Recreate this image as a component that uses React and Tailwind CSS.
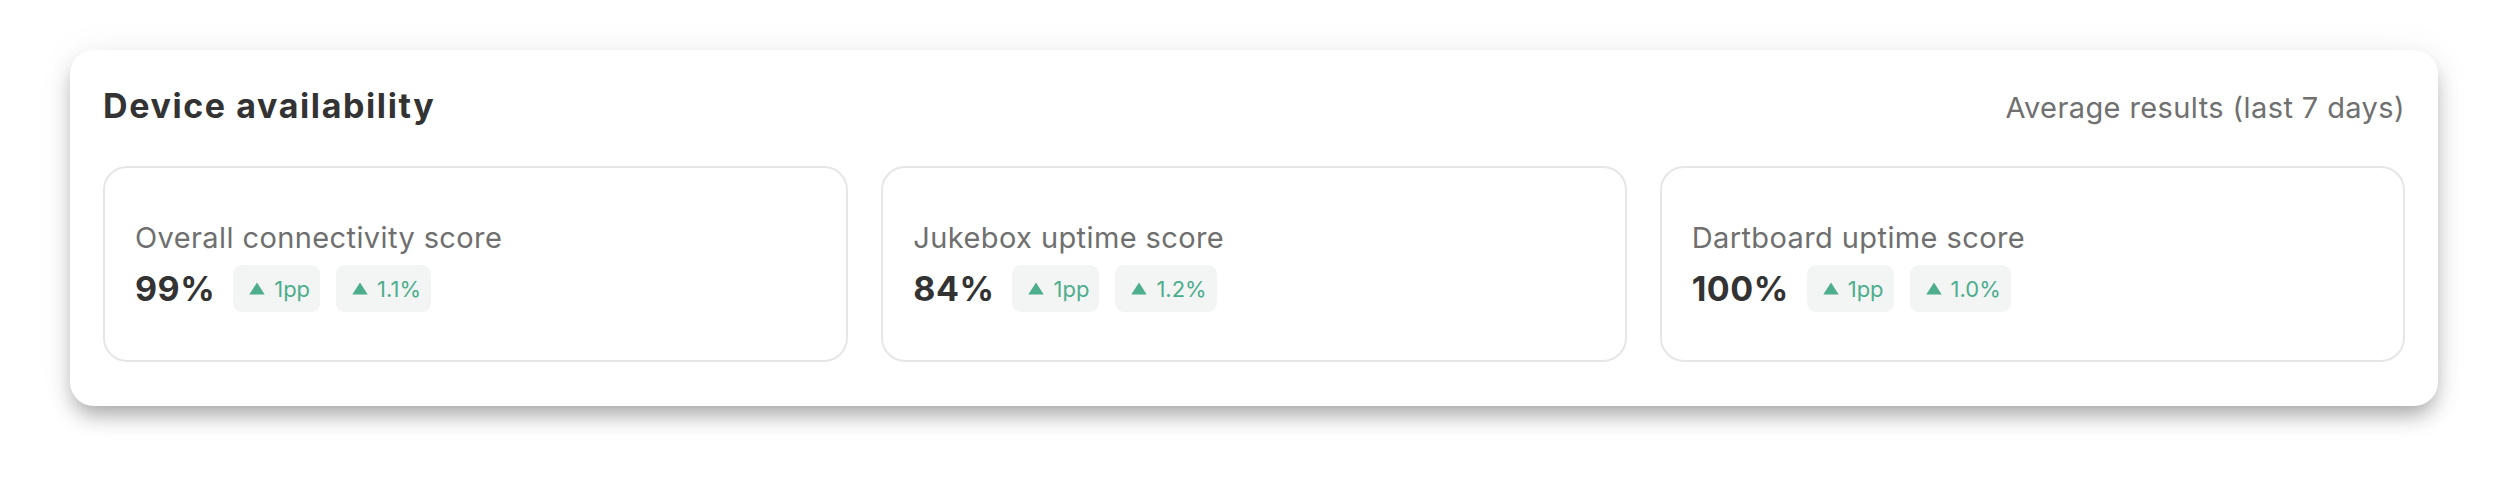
import React from 'react';

const stats = [
  { label: 'Overall connectivity score', value: '99%', deltas: ['1pp', '1.1%'] },
  { label: 'Jukebox uptime score', value: '84%', deltas: ['1pp', '1.2%'] },
  { label: 'Dartboard uptime score', value: '100%', deltas: ['1pp', '1.0%'] },
];

function UpBadge({ text }) {
  return (
    <div className="flex h-[47px] items-center gap-[9px] rounded-[9px] bg-[#f3f4f4] pl-4 pr-[10px] text-[22px] leading-none text-[#4cae8c]">
      <svg width="16" height="13" viewBox="0 0 16 13" className="shrink-0">
        <path d="M8 0.5 L15.7 12.5 L0.3 12.5 Z" fill="#4cae8c" />
      </svg>
      <span>{text}</span>
    </div>
  );
}

function StatCard({ label, value, deltas }) {
  return (
    <div className="rounded-[24px] border-2 border-[#e6e6e6] px-[30px] pt-[53px] pb-[48px]">
      <div className="text-[29px] leading-[34px] tracking-[0.4px] text-[#6f6f6f]">{label}</div>
      <div className="mt-[10px] flex items-center">
        <span className="mr-[18px] text-[34px] font-bold leading-none tracking-[0.5px] text-[#333333]">{value}</span>
        <div className="flex gap-4">
          {deltas.map((d) => (
            <UpBadge key={d} text={d} />
          ))}
        </div>
      </div>
    </div>
  );
}

export default function App() {
  return (
    <div className="min-h-[496px] bg-white px-[70px] pt-[50px] font-['Inter',sans-serif]">
      <div className="rounded-[24px] bg-white px-[33px] pt-[36px] pb-[44px] shadow-[0_12px_22px_-4px_rgba(0,0,0,0.35),0_0_40px_rgba(0,0,0,0.05)]">
        <div className="flex items-baseline justify-between">
          <h2 className="text-[34px] font-bold leading-[40px] tracking-[1.6px] text-[#333333]">Device availability</h2>
          <span className="text-[29px] leading-[40px] tracking-[0.4px] text-[#707070]">Average results (last 7 days)</span>
        </div>
        <div className="mt-[38px] grid grid-cols-3 gap-[33px]">
          {stats.map((s) => (
            <StatCard key={s.label} {...s} />
          ))}
        </div>
      </div>
    </div>
  );
}
